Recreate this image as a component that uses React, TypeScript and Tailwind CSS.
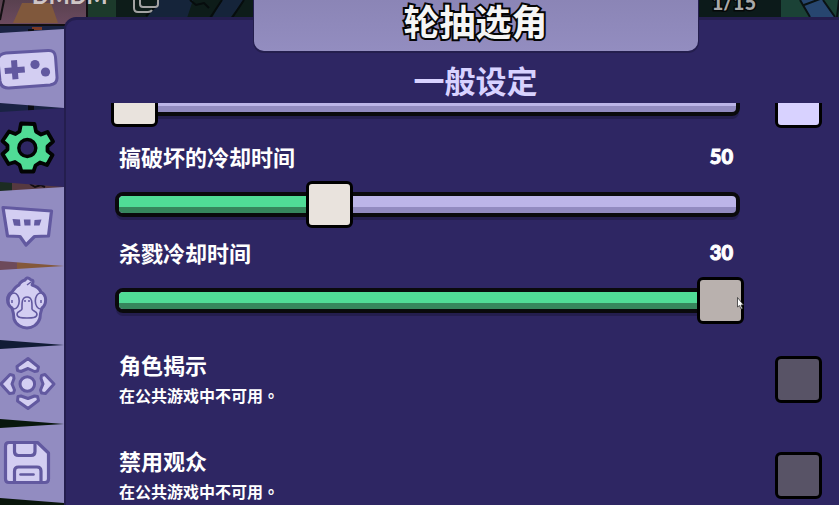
import { useState } from "react";
import type { ReactNode } from "react";

const FONT =
  "font-['Noto_Sans_CJK_SC','Noto_Sans_CJK_TC',sans-serif]";

function Backdrop() {
  return (
    <svg
      className="absolute inset-0 h-full w-full"
      viewBox="0 0 839 505"
      preserveAspectRatio="xMinYMin slice"
      aria-hidden="true"
    >
      <defs>
        <linearGradient id="dusk" x1="0" y1="0" x2="0" y2="1">
          <stop offset="0" stopColor="#59414f" />
          <stop offset="1" stopColor="#6b4a5f" />
        </linearGradient>
      </defs>
      <rect width="839" height="505" fill="#0c1817" />
      <rect width="88" height="25" fill="url(#dusk)" />
      <path d="M22 3h29l7 20H13z" fill="#80583c" />
      <path d="M0 25h68M87 0v18M4 0L0 20" stroke="#120f12" strokeWidth="2" fill="none" />
      <rect x="88" width="28" height="18" fill="#1c3a2b" />
      <rect x="116" width="138" height="18" fill="#0d1c19" />
      <path d="M158 0h35l-6 18h-40zM222 0h22l-14 18h-18z" fill="#15243a" />
      <path d="M190 0l6 5 8-2 5 5M222 0l-12 18M244 0l-12 18M146 16l12-12" stroke="#060c0d" strokeWidth="2" fill="none" />
      <rect y="26" width="66" height="90" fill="#1a2344" />
      <path d="M32 27h10v3H32z" fill="#7c3a26" />
      <path d="M28 29h6v84h-6z" fill="#0a0c12" />
      <rect y="180" width="66" height="14" fill="#563940" />
      <path d="M0 180h12v14H0z" fill="#1c2c22" />
      <path d="M30 184l5 3 6-2 4 2" stroke="#110d10" strokeWidth="2" fill="none" />
      <rect y="258" width="17" height="14" fill="#6d4a5a" />
      <rect x="17" y="258" width="49" height="14" fill="#84583a" />
      <rect y="337" width="66" height="14" fill="#111c36" />
      <rect y="416" width="66" height="14" fill="#08170d" />
      <rect y="495" width="66" height="10" fill="#0a160c" />
      <rect x="698" width="84" height="18" fill="#0c1a1a" />
      <rect x="781" width="58" height="18" fill="#1b4236" />
      <path d="M801 0h22l12 18h-25z" fill="#27466f" />
      <path d="M800 0l10 17M823 0l12 17M804 5l16-6M839 0l-2 17" stroke="#0a1214" strokeWidth="2" fill="none" />
    </svg>
  );
}

const INK = "#6259a0";
const PALE = "#d3cef2";

function GamepadIcon() {
  return (
    <svg width="64" height="79" viewBox="0 0 64 79" aria-hidden="true">
      <path d="M6 24L48 21.500Q55 21 55.500 28L57 48Q57.500 55 50 56L9 59Q1 59.500 0 52L-2 32Q-2 25 6 24z" fill={PALE} stroke={INK} strokeWidth="3" />
      <path d="M11 32.500l6-.5.500 7 7-.5.500 6-7 .5.500 6-6 .5-.5-6-7 .5-.5-6 7-.5z" fill={INK} transform="translate(0 -1)" />
      <circle cx="35" cy="35.500" r="4.600" fill={INK} />
      <circle cx="45.500" cy="43" r="4.600" fill={INK} />
    </svg>
  );
}

function GearIcon() {
  return (
    <svg width="64" height="79" viewBox="0 0 64 79" aria-hidden="true">
      <path
        d="M21 15.500L34.500 16 36 23.500 41 26.500 47.500 24 53 33.500 47.500 38.500V43L52.500 47 47 57 40 54.500 35.500 57.500 33.500 63.500H21.500L19.500 57 15 54 8.500 56 2.500 46 7.500 41.500V37.500L2.500 33 9 23.500 15.500 26 19.500 23.500z"
        fill="#50dc96" stroke="#020403" strokeWidth="3.800" strokeLinejoin="round"
      />
      <circle cx="27.300" cy="40" r="8.500" fill="#2e2663" stroke="#020403" strokeWidth="3.400" />
    </svg>
  );
}

function ChatIcon() {
  return (
    <svg width="64" height="79" viewBox="0 0 64 79" aria-hidden="true">
      <path d="M3 20.500L51.500 24 48.500 49 34.500 49.500 26 58 20 49.500 7.500 49z" fill={PALE} stroke={INK} strokeWidth="3.200" strokeLinejoin="round" />
      <path d="M12.500 32l7.500.5.500 6.500-6.500-.5zM23.800 32.500h6.700v6h-6zM34.500 33l7-.500-2 6h-5.500z" fill={INK} />
    </svg>
  );
}

function DuckIcon() {
  return (
    <svg width="64" height="79" viewBox="0 0 64 79" fill="none" stroke={INK} aria-hidden="true">
      <path d="M19 19c1-3 3-4 6-5 1-2 3-3 5-1l1 1c3 0 2 3 1 5 4 1 7 3 9 7 6 3 6 12 1 16-1 3-2 6-2 10-2 7-8 10-13 10s-11-3-13-9c0-5-1-8-2-11-6-4-6-13 0-16 2-3 4-6 7-7z" fill={PALE} strokeWidth="3" strokeLinejoin="round" />
      <ellipse cx="14" cy="35" rx="5.200" ry="8" strokeWidth="1.600" />
      <ellipse cx="40.500" cy="35" rx="5.200" ry="8" strokeWidth="1.600" />
      <path d="M22 43c0-4-1-12 5-12s5 8 5 12c0 2 5 2 5 5 0 4-5 4-10 4s-10 0-10-4c0-3 5-3 5-5z" strokeWidth="1.600" />
      <path d="M12 34v3M41 34v3M25 34v2M29 34v2M27 19l4-3" strokeWidth="1.500" />
    </svg>
  );
}

function MoveIcon() {
  return (
    <svg width="64" height="79" viewBox="0 0 64 79" fill={PALE} stroke={INK} strokeWidth="3" strokeLinejoin="round" aria-hidden="true">
      <circle cx="27.300" cy="39" r="7.300" />
      <path d="M28 13.500l10.500 8.500-1 4-3 .5-6.500-3-7 3-3.500-1-.5-4z" />
      <path d="M28 63.500l10.500-8-1-4-3-.5-6.500 2.500-7-2.500-3 .5-.5 4.500z" />
      <path d="M1 39l9-9.500 3.500 1 .5 3-2 5.500 2.500 6-1 3-4 .5z" />
      <path d="M54 39l-9-9.500-3.500 1-.5 3 2 5.500-2.500 6 1 3 4 .5z" />
    </svg>
  );
}

function SaveIcon() {
  return (
    <svg width="64" height="79" viewBox="0 0 64 79" fill="none" stroke={INK} strokeWidth="3.200" strokeLinejoin="round" strokeLinecap="round" aria-hidden="true">
      <path d="M9 18.500h28.500L48.500 29v26q0 3.500-3.500 3.500H9q-3.500 0-3.500-3.500V22q0-3.500 3.500-3.500z" fill={PALE} />
      <path d="M14.500 19v8.500q0 4 4 4H31q4 0 4-4V19M14.500 58V47q0-4 4-4H37q4 0 4 4v11" />
      <path d="M20.500 50.500h13" strokeWidth="2.600" />
    </svg>
  );
}

const TABS: { name: string; icon: ReactNode }[] = [
  { name: "游戏", icon: <GamepadIcon /> },
  { name: "设定", icon: <GearIcon /> },
  { name: "聊天", icon: <ChatIcon /> },
  { name: "角色", icon: <DuckIcon /> },
  { name: "操作", icon: <MoveIcon /> },
  { name: "保存", icon: <SaveIcon /> },
];

function TabRail() {
  const [active, setActive] = useState(1);
  return (
    <nav className="flex w-16 shrink-0 flex-col">
      <p className="h-[29px] pl-8 font-['Lato',sans-serif] text-[22px] leading-6 font-black whitespace-nowrap text-[#cfc5c5]">
        <span className="-mt-4 block">DMDM</span>
      </p>
      {TABS.map((tab, i) => (
        <button
          key={tab.name}
          type="button"
          aria-label={tab.name}
          aria-pressed={i === active}
          onClick={() => setActive(i)}
          className={`h-[79px] w-full shrink-0 [clip-path:polygon(0_4px,100%_0,100%_100%,0_calc(100%-5px))] ${
            i === active ? "bg-[#2e2663]" : "bg-[#928cc1]"
          }`}
        >
          {tab.icon}
        </button>
      ))}
    </nav>
  );
}

type SliderProps = {
  id: string;
  label: string;
  min: number;
  max: number;
  initial: number;
  step?: number;
  dimmed?: boolean;
};

function Slider({ id, label, min, max, initial, step = 1, dimmed }: SliderProps) {
  const [value, setValue] = useState(initial);
  const percent = ((value - min) / (max - min)) * 100;
  return (
    <div className="flex flex-col gap-3">
      <div className="flex h-[26px] items-center justify-between pr-[11px] pl-2 text-white">
        <label htmlFor={id} className="text-[22px] leading-[26px] font-bold">
          {label}
        </label>
        <output
          htmlFor={id}
          className="font-['Lato',sans-serif] text-xl leading-[26px] font-black [-webkit-text-stroke:1px_white]"
        >
          {value}
        </output>
      </div>
      <div className="grid items-center">
        <div className="col-start-1 row-start-1 mx-1 h-[25px] overflow-hidden rounded-lg border-4 border-[#0a0a0c] bg-linear-to-b from-[#bcb5e8] from-65% to-[#928bc0] to-65% shadow-[0_4px_0_-1px_#241e4e]">
          <div
            className="h-full rounded-l bg-linear-to-b from-[#50dc96] from-65% to-[#36865c] to-65%"
            style={{ width: `${percent}%` }}
          />
        </div>
        <input
          id={id}
          type="range"
          aria-label={label || "数值"}
          min={min}
          max={max}
          step={step}
          value={value}
          onChange={(e) => setValue(Number(e.target.value))}
          className={`col-start-1 row-start-1 h-[47px] w-full appearance-none bg-transparent [&::-webkit-slider-thumb]:h-[47px] [&::-webkit-slider-thumb]:w-[47px] [&::-webkit-slider-thumb]:appearance-none [&::-webkit-slider-thumb]:rounded-md [&::-webkit-slider-thumb]:border-3 [&::-webkit-slider-thumb]:border-black ${
            dimmed
              ? "[&::-webkit-slider-thumb]:bg-[#b9b1ae]"
              : "[&::-webkit-slider-thumb]:bg-[#e9e3dd]"
          }`}
        />
      </div>
    </div>
  );
}

const BOX = "h-[47px] w-[47px] shrink-0 appearance-none rounded-md border-3 border-black";

function LockedOption({ id, label }: { id: string; label: string }) {
  return (
    <div className="flex justify-between text-white">
      <div className="flex flex-col gap-1.5 pl-2">
        <label htmlFor={id} className="text-[22px] leading-[26px] font-bold">
          {label}
        </label>
        <p id={`${id}-note`} className="text-base leading-6 font-bold">
          在公共游戏中不可用
          <span className="font-['Noto_Sans_CJK_TC',sans-serif]">。</span>
        </p>
      </div>
      <input
        id={id}
        type="checkbox"
        disabled
        aria-describedby={`${id}-note`}
        className={`${BOX} mt-[5px] bg-[#585366]`}
      />
    </div>
  );
}

function Cursor() {
  return (
    <svg
      className="pointer-events-none absolute right-0 bottom-3.5"
      width="7"
      height="13"
      viewBox="0 0 7 13"
      aria-hidden="true"
    >
      <path d="M.5.500v9.500l2-1.500 1.500 3.500 1.500-.5-1.500-3.500h2.500z" fill="#fff" stroke="#333" strokeWidth=".8" />
    </svg>
  );
}

export default function App() {
  return (
    <div className={`relative h-screen overflow-hidden bg-[#0c1817] ${FONT}`}>
      <Backdrop />
      <div className="relative flex h-full">
        <TabRail />
        <div className="flex min-w-0 flex-1 flex-col">
          <div className="flex h-[17px] shrink-0 justify-between pr-[83px] pl-[68px]">
            <svg width="28" height="14" viewBox="0 0 28 14" fill="none" stroke="#a3a3a3" strokeWidth="2" aria-hidden="true">
              <path d="M2-4v12q0 4 4 4h10q3 0 4-2" />
              <path d="M8-6V4q0 3 3 3h12q3 0 3-3v-10" />
            </svg>
            <p className="-mt-2.5 font-['Lato',sans-serif] text-xl leading-6 font-black text-[#a9a9a9] [-webkit-text-stroke:3px_#050808] [paint-order:stroke_fill]">
              1/15
            </p>
          </div>
          <main className="flex min-h-0 flex-1 flex-col rounded-tl-xl border-t-3 border-l-2 border-[#241e4e] bg-[#2e2663]">
            <header className="-mt-5 flex flex-col items-center pl-[46px]">
              <h1 className="flex h-[51px] w-[444px] items-center justify-center rounded-b-[10px] bg-linear-to-b from-[#8b85b6] to-[#938dc0] pb-3 text-4xl leading-9 font-bold text-[#f5f5f5] shadow-[0_1px_0_1px_#241e4e] [-webkit-text-stroke:4px_#050505] [paint-order:stroke_fill]">
                轮抽选角
              </h1>
              <h2 className="flex h-[52px] items-center pt-1.5 text-[31px] leading-9 font-bold text-[#d8d2ff]">
                一般设定
              </h2>
            </header>
            <div className="min-h-0 flex-1 overflow-hidden">
              <div className="-mt-[61px] grid grid-cols-[1fr_47px] gap-x-[31px] pr-[17px] pl-[45px]">
                <Slider id="first" label="" min={0} max={10} initial={0} />
                <input type="checkbox" aria-label="启用" className={`${BOX} mt-[39px] bg-[#d8d2ff]`} />
                <div className="col-start-1 flex flex-col gap-[11px] pt-[15px]">
                  <Slider id="sabotage" label="搞破坏的冷却时间" min={0} max={150} initial={50} />
                  <div className="relative">
                    <Slider id="kill" label="杀戮冷却时间" min={10} max={30} initial={30} dimmed />
                    <Cursor />
                  </div>
                </div>
                <div className="col-span-2 flex flex-col gap-10 pt-[27px]">
                  <LockedOption id="reveal" label="角色揭示" />
                  <LockedOption id="spectators" label="禁用观众" />
                </div>
              </div>
            </div>
          </main>
        </div>
      </div>
    </div>
  );
}
